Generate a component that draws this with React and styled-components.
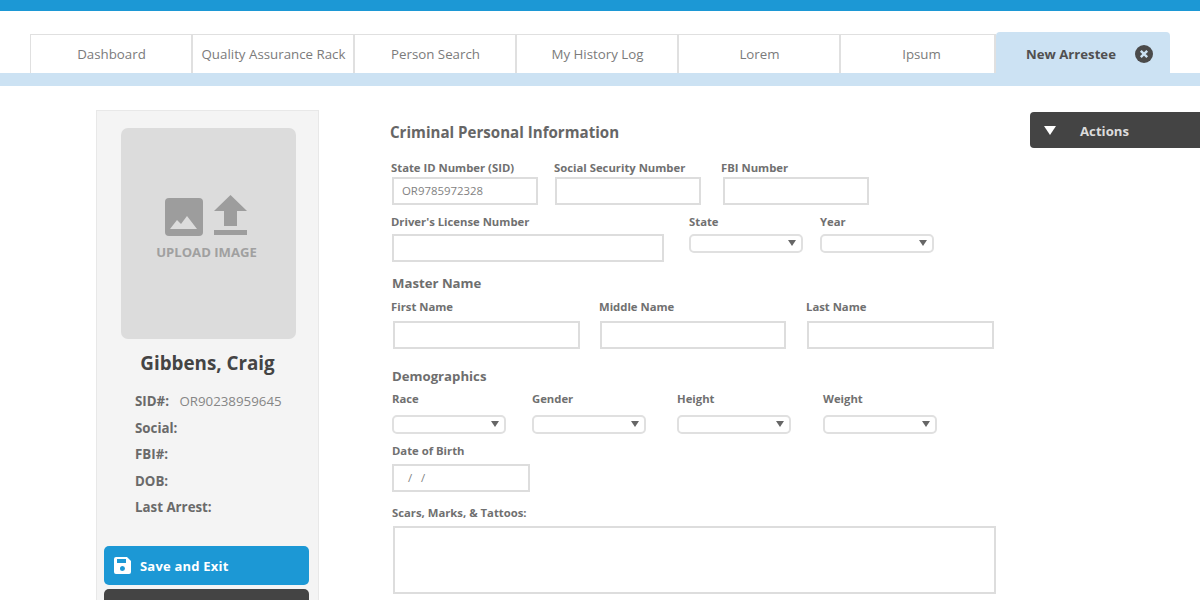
import styled, { createGlobalStyle } from 'styled-components';

const GlobalStyle = createGlobalStyle`
  html, body {
    margin: 0;
    padding: 0;
    background: #fff;
    font-family: "Open Sans", "Liberation Sans", sans-serif;
  }
  * { box-sizing: border-box; }
`;

const Page = styled.div`
  width: 1200px;
  height: 600px;
  overflow: hidden;
`;

const TopBar = styled.div`
  height: 11px;
  background: #1c98d5;
`;

const TabStrip = styled.div`
  display: flex;
  align-items: flex-end;
  height: 62px;
  padding-left: 30px;
`;

const Tab = styled.div`
  width: ${(p) => p.$w || 162}px;
  height: 39px;
  display: flex;
  align-items: center;
  justify-content: center;
  padding: 0 0 1px ${(p) => p.$pl || 1}px;
  border: 1px solid #e0e0e0;
  border-bottom: 0;
  border-left-width: ${(p) => (p.$first ? 1 : 0)}px;
  border-right-width: 2px;
  font-size: 13.3px;
  color: #7b7b7b;
  white-space: nowrap;
`;

const ActiveTab = styled.div`
  width: 174px;
  height: 41px;
  display: flex;
  align-items: center;
  padding: 2px 0 0 30px;
  gap: 19px;
  background: #cce2f3;
  border-radius: 4px 4px 0 0;
  font-size: 13.2px;
  font-weight: 700;
  color: #505050;
  white-space: nowrap;
`;

const Band = styled.div`
  height: 13px;
  background: #cce2f3;
`;

const Main = styled.div`
  display: flex;
  align-items: flex-start;
  padding-left: 96px;
`;

const Sidebar = styled.aside`
  width: 223px;
  height: 520px;
  margin-top: 24px;
  padding: 17px 7px 0;
  background: #f4f4f4;
  border: 1px solid #e8e8e8;
`;

const UploadBox = styled.div`
  width: 175px;
  height: 211px;
  margin-left: 17px;
  padding: 67px 4px 0 0;
  display: flex;
  flex-direction: column;
  align-items: center;
  background: #dcdcdc;
  border-radius: 7px;
`;

const UploadText = styled.div`
  margin-top: 6px;
  font-size: 13.1px;
  line-height: 20px;
  font-weight: 700;
  color: #a0a0a0;
`;

const PersonName = styled.h2`
  margin: 11px 0 12px;
  font-size: 18.8px;
  line-height: 26px;
  font-weight: 700;
  text-align: center;
  color: #444;
`;

const Meta = styled.div`
  padding-left: 31px;
  font-size: 13.3px;
`;

const MetaRow = styled.div`
  height: 26.5px;
  line-height: 26.5px;
  font-weight: 700;
  color: #6a6a6a;
`;

const MetaValue = styled.span`
  margin-left: 7px;
  font-weight: 400;
  color: #868686;
`;

const SideButton = styled.div`
  width: 205px;
  height: 39px;
  margin-top: ${(p) => p.$mt}px;
  display: flex;
  align-items: center;
  gap: 9px;
  padding: 1px 0 0 10px;
  background: ${(p) => p.$bg};
  border-radius: 5px;
  font-size: 13px;
  font-weight: 700;
  letter-spacing: 0.2px;
  color: #fff;
`;

const Form = styled.div`
  width: 640px;
  margin-left: 71px;
  padding-top: 36px;
`;

const Title = styled.h1`
  margin: 0;
  font-size: 15.1px;
  line-height: 20px;
  font-weight: 700;
  color: #666;
`;

const Section = styled.h3`
  margin: ${(p) => p.$mt}px 0 0 2px;
  font-size: 13.2px;
  line-height: 18px;
  font-weight: 700;
  color: #6e6e6e;
`;

const Row = styled.div`
  display: flex;
  align-items: flex-start;
  margin-top: ${(p) => p.$mt || 0}px;
`;

const Field = styled.div`
  flex: none;
  width: ${(p) => p.$w}px;
  margin-left: ${(p) => p.$ml || 0}px;
`;

const Label = styled.label`
  display: block;
  height: ${(p) => p.$h || 17}px;
  font-size: 11.3px;
  line-height: 17px;
  font-weight: 700;
  color: #707070;
  white-space: nowrap;
`;

const TextBox = styled.div`
  width: ${(p) => p.$w}px;
  height: ${(p) => p.$h || 28}px;
  margin-left: ${(p) => p.$ml ?? 1}px;
  padding-left: ${(p) => p.$pad || 8}px;
  border: 2px solid #dddddd;
  background: #fff;
  font-size: 11.4px;
  line-height: 24px;
  color: #828282;
  white-space: pre;
`;

const SelectBox = styled.div`
  position: relative;
  width: 114px;
  height: 19px;
  border: 2px solid #e0e0e0;
  border-radius: 5px;
  background: #fff;

  &::after {
    content: '';
    position: absolute;
    right: 5px;
    top: 4px;
    border-left: 4px solid transparent;
    border-right: 4px solid transparent;
    border-top: 6px solid #666;
  }
`;

const ActionsButton = styled.div`
  flex: 1;
  height: 36px;
  margin-top: 26px;
  display: flex;
  align-items: center;
  padding: 1px 0 0 14px;
  gap: 24px;
  background: #444;
  border-radius: 4px 0 0 4px;
  font-size: 13.2px;
  font-weight: 700;
  color: #dcdcdc;
`;

const Caret = styled.span`
  width: 0;
  height: 0;
  border-left: 6.5px solid transparent;
  border-right: 6.5px solid transparent;
  border-top: 9px solid #fff;
`;

const CloseIcon = () => (
  <svg width="18" height="18" viewBox="0 0 18 18">
    <circle cx="9" cy="9" r="9" fill="#4a4a4a" />
    <path d="M5.8 5.8l6.4 6.4M12.2 5.8l-6.4 6.4" stroke="#cce2f3" strokeWidth="2.4" />
  </svg>
);

const UploadIcon = () => (
  <svg width="83" height="41" viewBox="0 0 83 41">
    <rect x="0" y="3" width="38" height="38" rx="4" fill="#9d9d9d" />
    <path d="M5 34l7-9 4 4 6-8 10 13z" fill="#dcdcdc" />
    <path d="M65.5 0L82 16H72v15H59V16H49z" fill="#9d9d9d" />
    <rect x="49" y="35" width="33" height="5" fill="#9d9d9d" />
  </svg>
);

const SaveIcon = () => (
  <svg width="17" height="17" viewBox="0 0 17 17">
    <path
      fillRule="evenodd"
      fill="#fff"
      d="M2 0h11l4 4v11a2 2 0 0 1-2 2H2a2 2 0 0 1-2-2V2a2 2 0 0 1 2-2zM3 2v4h9V2zM8.5 9a2.5 2.5 0 1 0 0 5 2.5 2.5 0 0 0 0-5z"
    />
  </svg>
);

const tabs = ['Dashboard', 'Quality Assurance Rack', 'Person Search', 'My History Log', 'Lorem'];

export default function App() {
  return (
    <Page>
      <GlobalStyle />
      <TopBar />
      <TabStrip>
        {tabs.map((t, i) => (
          <Tab key={t} $first={i === 0} $w={i === 0 ? 163 : 162}>{t}</Tab>
        ))}
        <Tab $w={155} $pl={8}>Ipsum</Tab>
        <ActiveTab>
          New Arrestee
          <CloseIcon />
        </ActiveTab>
      </TabStrip>
      <Band />
      <Main>
        <Sidebar>
          <UploadBox>
            <UploadIcon />
            <UploadText>UPLOAD IMAGE</UploadText>
          </UploadBox>
          <PersonName>Gibbens, Craig</PersonName>
          <Meta>
            <MetaRow>SID#: <MetaValue>OR90238959645</MetaValue></MetaRow>
            <MetaRow>Social:</MetaRow>
            <MetaRow>FBI#:</MetaRow>
            <MetaRow>DOB:</MetaRow>
            <MetaRow>Last Arrest:</MetaRow>
          </Meta>
          <SideButton $bg="#1c98d5" $mt={25}>
            <SaveIcon />
            Save and Exit
          </SideButton>
          <SideButton $bg="#444" $mt={4} />
        </Sidebar>

        <Form>
          <Title>Criminal Personal Information</Title>
          <Row $mt={17}>
            <Field $w={163} $ml={1}>
              <Label $h={18}>State ID Number (SID)</Label>
              <TextBox $w={146}>OR9785972328</TextBox>
            </Field>
            <Field $w={167}>
              <Label $h={18}>Social Security Number</Label>
              <TextBox $w={146} />
            </Field>
            <Field $w={150}>
              <Label $h={18}>FBI Number</Label>
              <TextBox $w={146} $ml={2} />
            </Field>
          </Row>
          <Row $mt={8}>
            <Field $w={298} $ml={1}>
              <Label $h={21}>Driver's License Number</Label>
              <TextBox $w={272} />
            </Field>
            <Field $w={131}>
              <Label $h={21}>State</Label>
              <SelectBox />
            </Field>
            <Field $w={131}>
              <Label $h={21}>Year</Label>
              <SelectBox />
            </Field>
          </Row>
          <Section $mt={12}>Master Name</Section>
          <Row $mt={6}>
            <Field $w={208} $ml={1}>
              <Label $h={23}>First Name</Label>
              <TextBox $w={187} $ml={2} />
            </Field>
            <Field $w={207}>
              <Label $h={23}>Middle Name</Label>
              <TextBox $w={186} />
            </Field>
            <Field $w={190}>
              <Label $h={23}>Last Name</Label>
              <TextBox $w={187} />
            </Field>
          </Row>
          <Section $mt={18}>Demographics</Section>
          <Row $mt={5}>
            <Field $w={140} $ml={2}>
              <Label $h={25}>Race</Label>
              <SelectBox />
            </Field>
            <Field $w={145}>
              <Label $h={25}>Gender</Label>
              <SelectBox />
            </Field>
            <Field $w={146}>
              <Label $h={25}>Height</Label>
              <SelectBox />
            </Field>
            <Field $w={120}>
              <Label $h={25}>Weight</Label>
              <SelectBox />
            </Field>
          </Row>
          <Row $mt={8}>
            <Field $w={160} $ml={2}>
              <Label $h={22}>Date of Birth</Label>
              <TextBox $w={138} $ml={0} $pad={11}>{' /   /'}</TextBox>
            </Field>
          </Row>
          <Row $mt={12}>
            <Field $w={620} $ml={2}>
              <Label $h={22}>Scars, Marks, &amp; Tattoos:</Label>
              <TextBox $w={603} $h={68} />
            </Field>
          </Row>
        </Form>

        <ActionsButton>
          <Caret />
          Actions
        </ActionsButton>
      </Main>
    </Page>
  );
}
